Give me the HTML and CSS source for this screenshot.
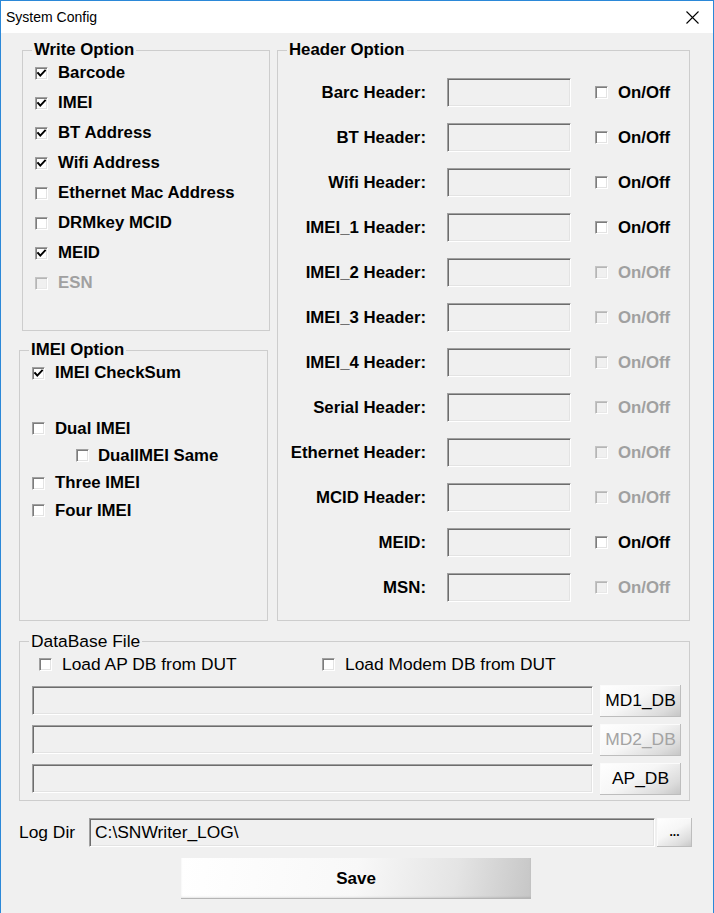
FILE: index.html
```html
<!DOCTYPE html>
<html>
<head>
<meta charset="utf-8">
<title>System Config</title>
<link rel="stylesheet" href="styles.css">
</head>
<body>
<div class="window">
  <div class="titlebar">
    <span class="title">System Config</span>
    <svg class="close" width="13" height="13" viewBox="0 0 13 13"><path d="M0.5 0.5 L12.5 12.5 M12.5 0.5 L0.5 12.5" stroke="#000" stroke-width="1.1" fill="none"/></svg>
  </div>
  <div class="client">
    <div class="top">
      <div class="leftcol">
        <div class="group write">
          <span class="gtitle bold">Write Option</span>
          <div class="crow"><span class="cb on"><svg viewBox="0 0 11 11"><polyline points="2,5 4.3,7.6 9,2.6"/></svg></span><span class="lbl bold">Barcode</span></div>
          <div class="crow"><span class="cb on"><svg viewBox="0 0 11 11"><polyline points="2,5 4.3,7.6 9,2.6"/></svg></span><span class="lbl bold">IMEI</span></div>
          <div class="crow"><span class="cb on"><svg viewBox="0 0 11 11"><polyline points="2,5 4.3,7.6 9,2.6"/></svg></span><span class="lbl bold">BT Address</span></div>
          <div class="crow"><span class="cb on"><svg viewBox="0 0 11 11"><polyline points="2,5 4.3,7.6 9,2.6"/></svg></span><span class="lbl bold">Wifi Address</span></div>
          <div class="crow"><span class="cb"></span><span class="lbl bold">Ethernet Mac Address</span></div>
          <div class="crow"><span class="cb"></span><span class="lbl bold">DRMkey MCID</span></div>
          <div class="crow"><span class="cb on"><svg viewBox="0 0 11 11"><polyline points="2,5 4.3,7.6 9,2.6"/></svg></span><span class="lbl bold">MEID</span></div>
          <div class="crow dis"><span class="cb"></span><span class="lbl bold">ESN</span></div>
        </div>
        <div class="group imei">
          <span class="gtitle bold">IMEI Option</span>
          <div class="crow"><span class="cb on"><svg viewBox="0 0 11 11"><polyline points="2,5 4.3,7.6 9,2.6"/></svg></span><span class="lbl bold">IMEI CheckSum</span></div>
          <div class="crow short first"><span class="cb"></span><span class="lbl bold">Dual IMEI</span></div>
          <div class="crow short indent"><span class="cb"></span><span class="lbl bold">DualIMEI Same</span></div>
          <div class="crow short"><span class="cb"></span><span class="lbl bold">Three IMEI</span></div>
          <div class="crow short"><span class="cb"></span><span class="lbl bold">Four IMEI</span></div>
        </div>
      </div>
      <div class="group header">
        <span class="gtitle bold">Header Option</span>
        <div class="hrow"><span class="hlabel bold">Barc Header:</span><span class="field"></span><span class="cb"></span><span class="lbl bold">On/Off</span></div>
        <div class="hrow"><span class="hlabel bold">BT Header:</span><span class="field"></span><span class="cb"></span><span class="lbl bold">On/Off</span></div>
        <div class="hrow"><span class="hlabel bold">Wifi Header:</span><span class="field"></span><span class="cb"></span><span class="lbl bold">On/Off</span></div>
        <div class="hrow"><span class="hlabel bold">IMEI_1 Header:</span><span class="field"></span><span class="cb"></span><span class="lbl bold">On/Off</span></div>
        <div class="hrow dis"><span class="hlabel bold">IMEI_2 Header:</span><span class="field"></span><span class="cb"></span><span class="lbl bold">On/Off</span></div>
        <div class="hrow dis"><span class="hlabel bold">IMEI_3 Header:</span><span class="field"></span><span class="cb"></span><span class="lbl bold">On/Off</span></div>
        <div class="hrow dis"><span class="hlabel bold">IMEI_4 Header:</span><span class="field"></span><span class="cb"></span><span class="lbl bold">On/Off</span></div>
        <div class="hrow dis"><span class="hlabel bold">Serial Header:</span><span class="field"></span><span class="cb"></span><span class="lbl bold">On/Off</span></div>
        <div class="hrow dis"><span class="hlabel bold">Ethernet Header:</span><span class="field"></span><span class="cb"></span><span class="lbl bold">On/Off</span></div>
        <div class="hrow dis"><span class="hlabel bold">MCID Header:</span><span class="field"></span><span class="cb"></span><span class="lbl bold">On/Off</span></div>
        <div class="hrow"><span class="hlabel bold">MEID:</span><span class="field"></span><span class="cb"></span><span class="lbl bold">On/Off</span></div>
        <div class="hrow dis"><span class="hlabel bold">MSN:</span><span class="field"></span><span class="cb"></span><span class="lbl bold">On/Off</span></div>
      </div>
    </div>
    <div class="group db">
      <span class="gtitle reg">DataBase File</span>
      <div class="loadrow">
        <div class="litem first"><span class="cb"></span><span class="lbl reg">Load AP DB from DUT</span></div>
        <div class="litem"><span class="cb"></span><span class="lbl reg">Load Modem DB from DUT</span></div>
      </div>
      <div class="dbrow"><span class="field wide"></span><button class="btn dbbtn">MD1_DB</button></div>
      <div class="dbrow"><span class="field wide"></span><button class="btn dbbtn disabled">MD2_DB</button></div>
      <div class="dbrow"><span class="field wide"></span><button class="btn dbbtn">AP_DB</button></div>
    </div>
    <div class="logrow">
      <span class="loglabel reg">Log Dir</span>
      <span class="field logfield reg">C:\SNWriter_LOG\</span>
      <button class="btn dots">...</button>
    </div>
    <div class="saverow">
      <button class="btn save">Save</button>
    </div>
  </div>
</div>
</body>
</html>
```
FILE: styles.css
```css
* { box-sizing: border-box; }
html, body { margin: 0; padding: 0; }
body { background: #f0f0f0; font-family: "Liberation Sans", Arial, sans-serif; color: #000; }

.window {
  width: 714px;
  height: 913px;
  border: 1px solid #2b88d8;
  border-bottom: none;
  background: #f0f0f0;
  overflow: hidden;
}

.titlebar {
  height: 32px;
  background: #fff;
  display: flex;
  align-items: center;
  justify-content: space-between;
  padding: 0 14px 0 5px;
}
.title { font-size: 14px; color: #000; }
.close { display: block; }

.client { padding-left: 18px; }

.bold { font-weight: bold; font-size: 16.8px; }
.reg { font-weight: normal; font-size: 17.4px; }

.top { display: flex; align-items: flex-start; }
.leftcol { width: 251px; display: flex; flex-direction: column; }

.group {
  position: relative;
  border: 1px solid #cdcdcd;
}
.gtitle {
  position: absolute;
  top: -11px;
  left: 9px;
  padding: 0 2px;
  background: #f0f0f0;
  line-height: 20px;
  white-space: nowrap;
}

.write {
  margin-top: 17px;
  margin-left: 3px;
  width: 248px;
  height: 281px;
  padding: 7px 0 0 12px;
}
.imei {
  margin-top: 19px;
  width: 249px;
  height: 271px;
  padding: 7px 0 0 12px;
}
.header {
  margin-top: 17px;
  margin-left: 7px;
  width: 413px;
  height: 571px;
  padding-top: 19px;
}

.crow {
  height: 30px;
  display: flex;
  align-items: center;
  gap: 10px;
  white-space: nowrap;
}
.crow.short { height: 27.3px; }
.crow.first { margin-top: 27px; }
.crow.indent { padding-left: 44px; gap: 9px; }

.cb {
  flex: none;
  width: 13px;
  height: 13px;
  background: #fff;
  border-top: 1px solid #a0a0a0;
  border-left: 1px solid #a0a0a0;
  border-right: 1px solid #fff;
  border-bottom: 1px solid #fff;
  box-shadow: inset 1px 1px 0 #7c7c7c, inset -1px -1px 0 #e3e3e3;
  display: flex;
  align-items: center;
  justify-content: center;
}
.cb svg { width: 11px; height: 11px; display: block; }
.cb polyline { fill: none; stroke: #000; stroke-width: 1.9; stroke-linecap: square; }

.dis .lbl, .dis .hlabel.x { color: #a0a0a0; }
.dis .cb {
  background: #f0f0f0;
  box-shadow: inset 1px 1px 0 #b5b5b5, inset -1px -1px 0 #e8e8e8;
  border-top-color: #c4c4c4;
  border-left-color: #c4c4c4;
}

.hrow {
  height: 45px;
  display: flex;
  align-items: center;
  white-space: nowrap;
}
.hlabel {
  width: 148px;
  text-align: right;
  flex: none;
}
.field {
  flex: none;
  display: block;
  height: 29px;
  background: #f0f0f0;
  border-top: 1px solid #a0a0a0;
  border-left: 1px solid #a0a0a0;
  border-right: 1px solid #fff;
  border-bottom: 1px solid #fff;
  box-shadow: inset 1px 1px 0 #6d6d6d, inset -1px -1px 0 #e3e3e3;
}
.hrow .field { width: 124px; margin-left: 21px; margin-right: 24px; }
.hrow .lbl { margin-left: 10px; }

.db {
  margin-top: 20px;
  width: 671px;
  height: 160px;
  padding: 7px 0 0 12px;
}
.loadrow {
  height: 30px;
  display: flex;
  align-items: center;
  margin-left: 7px;
  margin-bottom: 5px;
}
.litem { display: flex; align-items: center; gap: 10px; white-space: nowrap; }
.litem.first { width: 283px; }

.dbrow {
  height: 33px;
  display: flex;
  align-items: center;
  margin-bottom: 6px;
}
.field.wide { width: 561px; margin-right: 7px; }

.btn {
  font-family: "Liberation Sans", Arial, sans-serif;
  font-size: 17.4px;
  color: #000;
  border: none;
  padding: 0;
  cursor: default;
  background: linear-gradient(150deg, #ffffff 0%, #f6f6f6 45%, #dcdcdc 80%, #c4c4c4 100%);
  box-shadow: inset -1px -1px 0 #bdbdbd, inset 1px 1px 0 #fbfbfb;
}
.dbbtn { width: 81px; height: 32px; }
.btn.disabled { color: #a3a3a3; }

.logrow {
  margin-top: 16px;
  height: 30px;
  display: flex;
  align-items: center;
}
.loglabel { width: 70px; flex: none; }
.logfield {
  width: 566px;
  height: 29px;
  padding-left: 5px;
  line-height: 27px;
  margin-right: 2px;
  white-space: nowrap;
}
.dots { width: 35px; height: 29px; font-size: 12px; font-weight: bold; line-height: 20px; }

.saverow { margin-top: 11px; padding-left: 162px; }
.save {
  width: 350px;
  height: 41px;
  font-weight: bold;
  font-size: 17px;
  background: linear-gradient(100deg, #ffffff 0%, #f8f8f8 50%, #e4e4e4 78%, #c6c6c6 100%);
  box-shadow: inset 0 -2px 2px rgba(0,0,0,0.10), inset -1px -1px 0 #c8c8c8;
}
```
